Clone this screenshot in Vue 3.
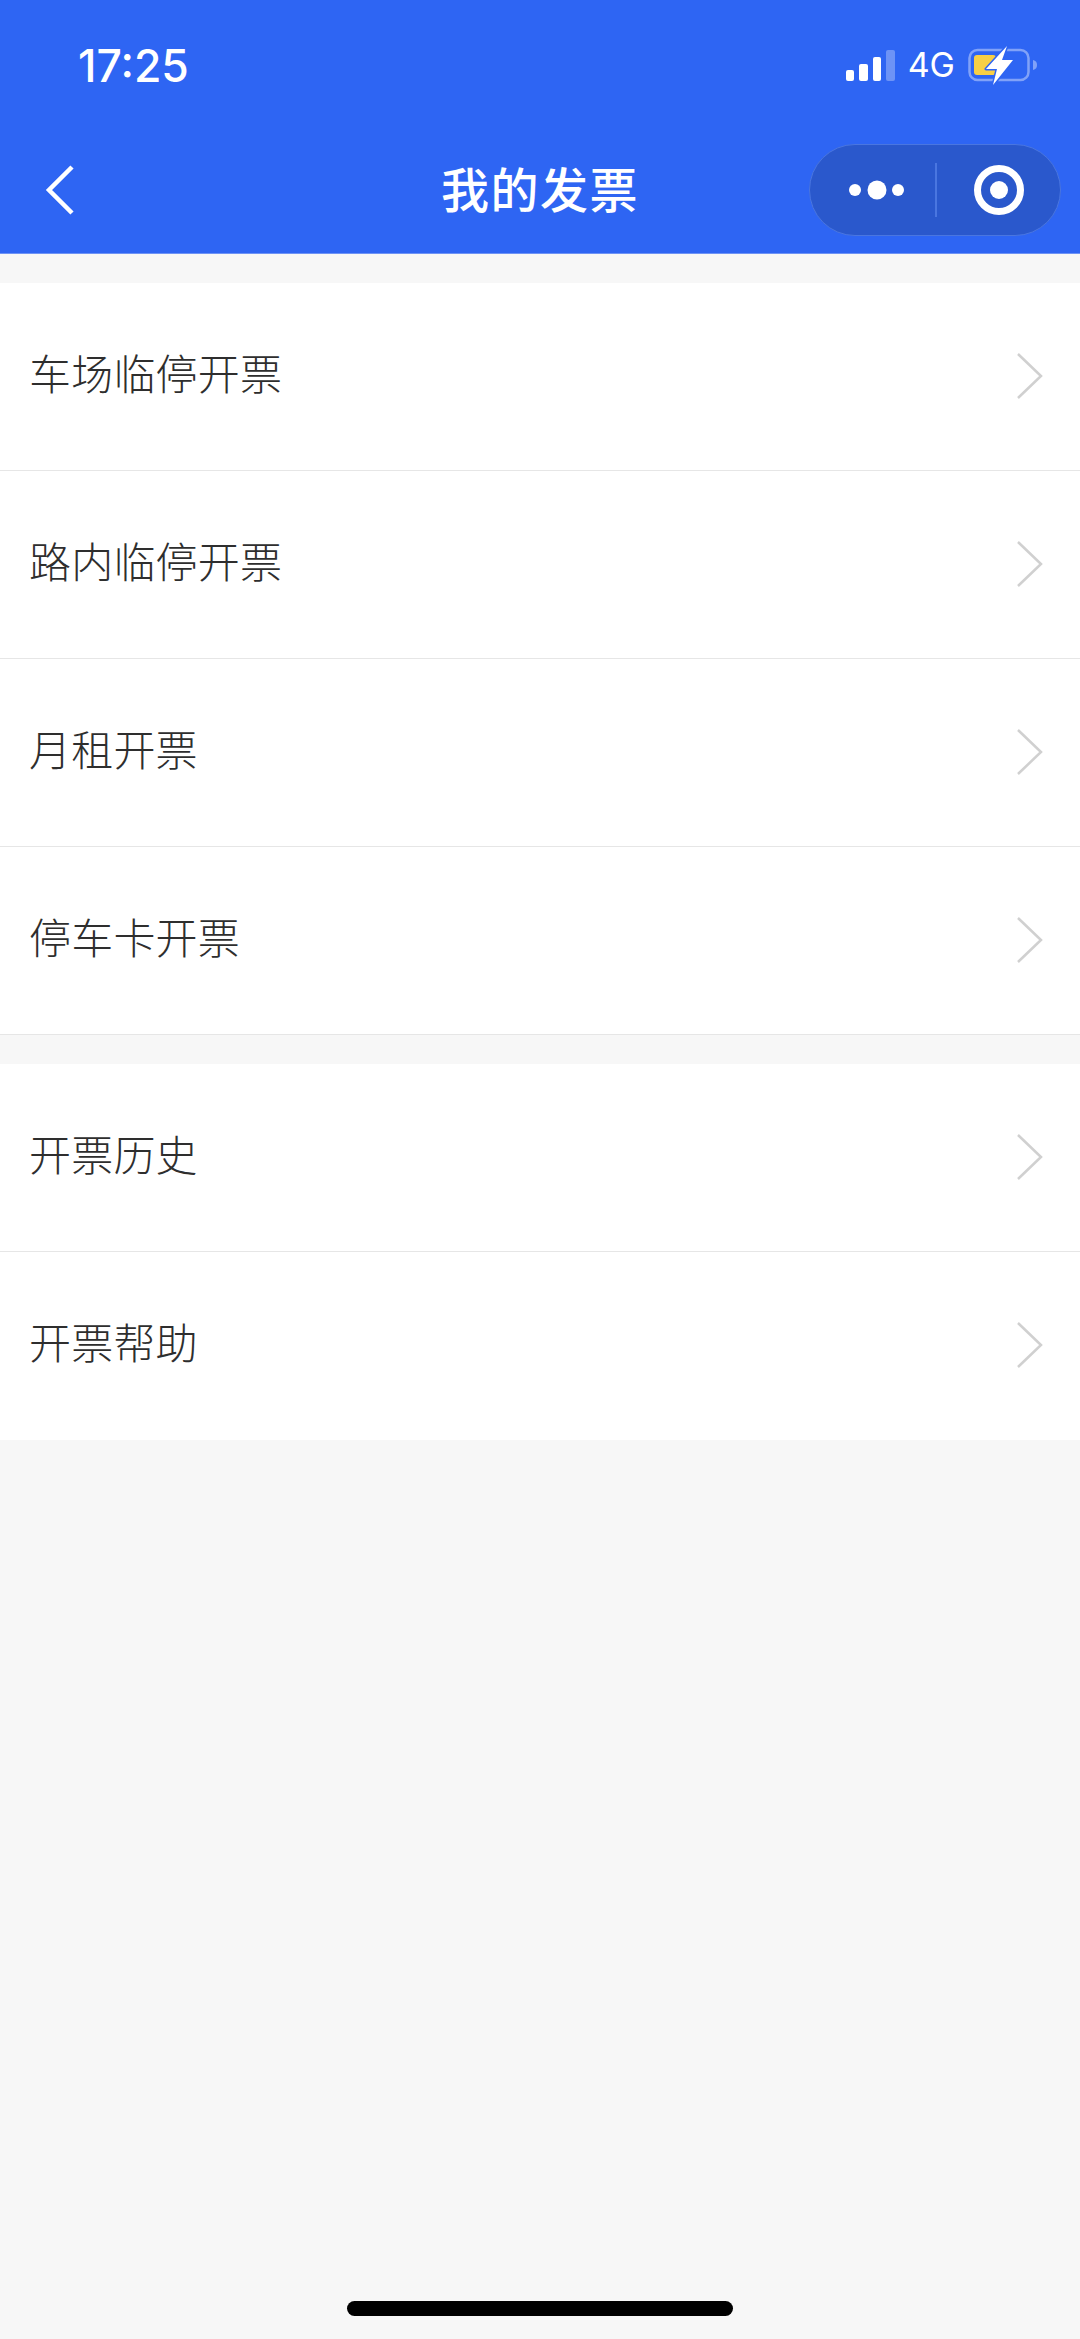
<script setup>
const groups = [
  ['车场临停开票', '路内临停开票', '月租开票', '停车卡开票'],
  ['开票历史', '开票帮助']
]
</script>

<template>
  <div class="page">
    <header class="header">
      <div class="status">
        <span class="time">17:25</span>
        <div class="status-right">
          <div class="signal">
            <i class="bar b1"></i><i class="bar b2"></i><i class="bar b3"></i><i class="bar b4"></i>
          </div>
          <span class="net">4G</span>
          <svg class="battery" width="72" height="42" viewBox="0 0 72 42">
            <rect x="1.5" y="6" width="59" height="30" rx="8" fill="none" stroke="#fff" stroke-opacity=".4" stroke-width="2.500"/>
            <path d="M65 16c3 .5 4 2.500 4 5s-1 4.500-4 5z" fill="#fff" fill-opacity=".4"/>
            <rect x="6" y="11" width="22" height="20" rx="3" fill="#f8cf45"/>
            <path d="M39 2 L18 25 H29 L25 41 L45 16 H34 Z" fill="#fff" stroke="#2e65f3" stroke-width="3" stroke-linejoin="round" paint-order="stroke"/>
          </svg>
        </div>
      </div>
      <nav class="nav">
        <div class="nav-left">
          <svg width="34" height="54" viewBox="0 0 34 54">
            <path d="M27 4 L4 27 L27 50" fill="none" stroke="#fff" stroke-width="4.500"/>
          </svg>
        </div>
        <h1 class="title">我的发票</h1>
        <div class="nav-right">
          <div class="capsule">
            <svg class="more" width="62" height="20" viewBox="0 0 62 20">
              <circle cx="8" cy="10" r="6" fill="#fff"/>
              <circle cx="30" cy="10" r="9.500" fill="#fff"/>
              <circle cx="51" cy="10" r="6" fill="#fff"/>
            </svg>
            <span class="sep"></span>
            <svg class="target" width="52" height="52" viewBox="0 0 52 52">
              <circle cx="26" cy="26" r="21.500" fill="none" stroke="#fff" stroke-width="7"/>
              <circle cx="26" cy="26" r="9" fill="#fff"/>
            </svg>
          </div>
        </div>
      </nav>
    </header>

    <section v-for="(group, i) in groups" :key="i" class="group">
      <div v-for="label in group" :key="label" class="row">
        <span class="label">{{ label }}</span>
        <svg class="arrow" width="28" height="48" viewBox="0 0 28 48">
          <path d="M2 2 L25 24 L2 46" fill="none" stroke="#d0d0d0" stroke-width="2.500"/>
        </svg>
      </div>
    </section>

    <div class="home"></div>
  </div>
</template>

<style scoped>
.page {
  width: 1080px;
  height: 2339px;
  display: flex;
  flex-direction: column;
  background: #f7f7f7;
  font-family: "Noto Sans CJK SC", "Noto Sans", sans-serif;
  overflow: hidden;
}
.header {
  height: 254px;
  box-sizing: border-box;
  background: #2e65f3;
  border-bottom: 1px solid #6e93f5;
  color: #fff;
}
.status {
  height: 127px;
  box-sizing: border-box;
  padding: 5px 40px 0 78px;
  display: flex;
  align-items: center;
  justify-content: space-between;
}
.time {
  font-family: Inter, "Liberation Sans", sans-serif;
  font-size: 44.500px;
  font-weight: 500;
  line-height: 1;
}
.status-right {
  display: flex;
  align-items: center;
  padding-bottom: 3px;
}
.signal {
  display: flex;
  align-items: flex-end;
  gap: 5px;
  height: 32px;
  margin-right: 13px;
}
.bar {
  display: block;
  width: 8.500px;
  background: #fff;
  border-radius: 2px;
}
.b1 { height: 11px; }
.b2 { height: 17px; }
.b3 { height: 24px; }
.b4 { height: 31px; background: rgba(255, 255, 255, .3); }
.net {
  font-family: Inter, "Liberation Sans", sans-serif;
  font-size: 34px;
  line-height: 1;
  margin-right: 13px;
}
.battery {
  display: block;
}
.nav {
  height: 126px;
  display: grid;
  grid-template-columns: 1fr auto 1fr;
  align-items: center;
}
.nav-left {
  display: flex;
  padding-left: 45px;
}
.nav-left svg {
  display: block;
}
.title {
  margin: 0;
  padding-bottom: 6px;
  font-size: 48px;
  font-weight: 500;
  letter-spacing: 1.500px;
  line-height: 1;
}
.nav-right {
  display: flex;
  justify-content: flex-end;
  padding-right: 19px;
}
.capsule {
  width: 252px;
  height: 92px;
  box-sizing: border-box;
  display: flex;
  align-items: center;
  background: #2a58cc;
  border: 1.500px solid #4a76e0;
  border-radius: 46px;
  padding-left: 37px;
}
.more {
  display: block;
}
.sep {
  width: 1.500px;
  height: 54px;
  background: #4a76e0;
  margin-left: 26px;
}
.target {
  display: block;
  margin-left: 36px;
}
.group {
  margin-top: 29px;
  background: #fff;
}
.row {
  height: 188px;
  box-sizing: border-box;
  border-bottom: 1.500px solid #e6e6e6;
  padding: 0 36px 0 29px;
  display: flex;
  align-items: center;
  justify-content: space-between;
}
.group + .group .row:last-child {
  border-bottom: 0;
}
.label {
  padding-bottom: 10px;
  font-size: 42px;
  font-weight: 300;
  line-height: 1;
  letter-spacing: .2px;
  color: #2e2e2e;
}
.arrow {
  display: block;
  margin-bottom: 2px;
}
.home {
  width: 386px;
  height: 15px;
  margin: auto auto 23px;
  background: #000;
  border-radius: 8px;
}
</style>
